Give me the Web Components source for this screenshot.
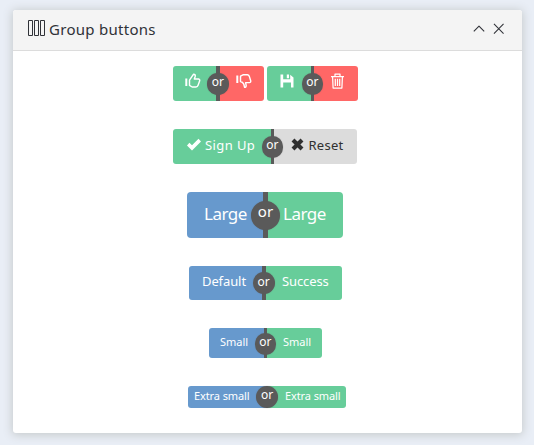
<!DOCTYPE html>
<html lang="en"><head><meta charset="utf-8"><title>Group buttons</title>
<style>
body{margin:0;width:534px;height:445px;overflow:hidden;background:#e9eef6;font-family:"Noto Sans",sans-serif;color:#303238}
panel-card{margin:10px 0 0 13px}
.row{display:flex;gap:3px}
</style></head><body>
<panel-card>
<span slot="title">Group buttons</span>
<div class="row" style="margin:15px 0 0 160px">
<or-group style="--h:35px;--l:43px;--s:4px;--r:44px;--bx:34px;--by:7px;--b:21.5px;--ot:-2px">
<or-button slot="a" tone="green" style="--pl:12px"><ui-icon name="up" style="--w:16px;--ih:16px;--it:7px"></ui-icon></or-button>
<or-button slot="b" tone="red" style="--pl:16px"><ui-icon name="down" style="--w:16px;--ih:16px;--it:7px"></ui-icon></or-button></or-group>
<or-group style="--h:35px;--l:44px;--s:3px;--r:44px;--bx:34.5px;--by:7px;--b:21.5px;--ot:-2px">
<or-button slot="a" tone="green" style="--pl:13px"><ui-icon name="save" style="--w:14px;--ih:14px;--it:8px"></ui-icon></or-button>
<or-button slot="b" tone="red" style="--pl:17px"><ui-icon name="trash" style="--w:13px;--ih:16px;--it:7px"></ui-icon></or-button></or-group>
</div>
<or-group style="margin:28px 0 0 160px;--h:35px;--l:98px;--s:3px;--r:83px;--bx:88.5px;--by:7px;--b:21.5px;--ot:-2px">
<or-button slot="a" tone="green" style="--pl:14px;--fs:13px;--lt:6px;--ls:.4px"><ui-icon name="check" style="--w:14px;--ih:13px;--it:9px;margin-right:4px"></ui-icon>Sign Up</or-button>
<or-button slot="b" tone="gray" style="--pl:17px;--fs:13px;--lt:6px;--ls:.25px"><ui-icon name="cross" style="--w:13px;--ih:13px;--it:9px;margin-right:4.5px"></ui-icon>Reset</or-button></or-group>
<or-group style="margin:28px 0 0 174px;--h:46px;--l:76px;--s:5px;--r:75px;--rad:4px;--bx:64px;--by:9px;--b:29px;--ofs:15px;--ot:-4px">
<or-button slot="a" tone="blue" style="--pl:17px;--fs:17px;--lt:11.5px;--ls:-.5px">Large</or-button>
<or-button slot="b" tone="green" style="--pl:15px;--fs:17px;--lt:11.5px;--ls:-.5px">Large</or-button></or-group>
<or-group style="margin:28px 0 0 176px;--h:34px;--l:73px;--s:4px;--r:76px;--bx:63.5px;--by:6px;--b:22px;--ot:-1.5px">
<or-button slot="a" tone="blue" style="--pl:13px;--fs:13px;--lt:5px;--ls:-.1px">Default</or-button>
<or-button slot="b" tone="green" style="--pl:16px;--fs:13px;--lt:5px;--ls:-.1px">Success</or-button></or-group>
<or-group style="margin:28px 0 0 196px;--h:30px;--l:55px;--s:3px;--r:55px;--bx:45.5px;--by:5px;--b:21.5px;--ot:-2px">
<or-button slot="a" tone="blue" style="--pl:11px;--fs:11px;--lt:4px">Small</or-button>
<or-button slot="b" tone="green" style="--pl:16px;--fs:11px;--lt:4px">Small</or-button></or-group>
<or-group style="margin:28px 0 0 175px;--h:22px;--l:78px;--s:2px;--r:78px;--bx:68px;--by:0px;--b:22px;--ot:-2px">
<or-button slot="a" tone="blue" style="--pl:6px;--fs:11px;--lt:0px;--ls:-.1px">Extra small</or-button>
<or-button slot="b" tone="green" style="--pl:17px;--fs:11px;--lt:0px;--ls:-.1px">Extra small</or-button></or-group>
</panel-card>
<script>
const define=(name,html,setup)=>customElements.define(name,class extends HTMLElement{
  connectedCallback(){
    if(this.shadowRoot)return;
    const t=document.createElement('template');t.innerHTML=html;
    this.attachShadow({mode:'open'}).append(t.content.cloneNode(true));
    if(setup)setup(this);
  }
});
const ICONS={
 up:['0 0 16 16','<path d="M1.3 5.5V13" stroke-width="2" stroke-linecap="butt"/><path d="M4.5 7.2 8.6 1.2Q10.6 1.1 10.2 3.4L9.3 6H13.6Q15.2 6.4 14.6 8L13 12.4Q12.6 14 11 14H7.2L4.5 12.3Z"/>'],
 down:['0 0 16 16','<path d="M1.3 2.5V10" stroke-width="2" stroke-linecap="butt"/><path d="M4.5 8.5V3.2L7 1.8H11.5Q13 2 13.4 3.6L14.7 7.8Q15 9.4 13.4 9.6H9.6L10.2 12.6Q10.2 14.4 8.6 14.3L7.8 11.2Q6.6 9 4.5 8.5Z"/>'],
 save:['0 0 14 14','<path d="M.5.5H3.2V5.2H10.2V.7L13.5 3.6V13.5H11V8.5H3.2V13.5H.5ZM6.8.5H9V4.2H6.8Z" fill="currentColor" stroke="none"/>'],
 trash:['0 0 13 16','<path d="M0 3.5H13M4 3.2V1H9V3.2M1.6 4.2 2.1 15H10.9L11.4 4.2M4.3 5.8V13M6.5 5.8V13M8.7 5.8V13" stroke-width="1.25"/>'],
 check:['0 0 14 12','<path d="M0 6.9 2.4 4.2 5 6.8 11.5.3 14 3 5 12Z" fill="currentColor" stroke="none"/>'],
 cross:['0 0 13 13','<path d="M2 2 11 11M11 2 2 11" stroke-width="4.1" stroke-linecap="butt"/>'],
 bars:['0 0 17 17','<path d="M.5.5H4.5V15.5H.5ZM6.5.5H10.5V15.5H6.5ZM12.5.5H16.5V15.5H12.5Z" stroke-width="1"/>'],
 chevron:['0 0 12 12','<path d="M.8 8.4 6 3.2 11.2 8.4" stroke-width="1.1"/>'],
 close:['0 0 12 12','<path d="M1 1 11 11M11 1 1 11" stroke-width="1.1"/>']
};
define('ui-icon',`<style>:host{display:block;flex:none;width:var(--w);height:var(--ih);margin-top:var(--it,0)}svg{display:block;width:100%;height:100%;fill:none;stroke:currentColor;stroke-width:1.45;stroke-linejoin:round;overflow:visible}</style><svg></svg>`,e=>{
  const [box,shape]=ICONS[e.getAttribute('name')],s=e.shadowRoot.querySelector('svg');
  s.setAttribute('viewBox',box);s.innerHTML=shape;
});
define('or-button',`<style>
:host{display:flex;box-sizing:border-box;height:100%;padding-left:var(--pl);color:#fff;white-space:nowrap;overflow:hidden}
:host([tone=green]){background:#67cd9a}:host([tone=red]){background:#ff6766}:host([tone=blue]){background:#6799cd}:host([tone=gray]){background:#dcdcdc;color:#303030}
.label{display:block;font-size:var(--fs,13px);letter-spacing:var(--ls,0);line-height:20px;padding-top:var(--lt,0)}
</style><slot name="icon"></slot><span class="label"><slot></slot></span>`,e=>{
  const icon=e.querySelector('ui-icon');
  if(icon)icon.slot='icon';
});
define('or-group',`<style>
:host{display:grid;grid-template-columns:var(--l) var(--s) var(--r);height:var(--h);width:max-content;position:relative;flex:none}
.half{height:var(--h);overflow:hidden}
.first{border-radius:var(--rad,3px) 0 0 var(--rad,3px)}.last{border-radius:0 var(--rad,3px) var(--rad,3px) 0}
.sep{background:#5a5a5a;height:var(--h)}
.or{position:absolute;left:var(--bx);top:var(--by);width:var(--b);height:var(--b);border-radius:50%;background:#5a5a5a;box-shadow:0 0 1px #5a5a5a88;color:#fff;text-align:center;font-size:var(--ofs,12px);line-height:calc(var(--b) + var(--ot)*2)}
</style><div class="half first"><slot name="a"></slot></div><div class="sep"></div><div class="half last"><slot name="b"></slot></div><span class="or">or</span>`);
define('panel-card',`<style>
:host{display:block;width:509px;height:423px;border-radius:3px;background:#fff;box-shadow:0 1px 10px 1px #c6cacb}
header{box-sizing:border-box;height:41px;display:flex;background:#f4f4f4;border-bottom:1px solid #dcdcdc;border-radius:3px 3px 0 0;padding-left:15px}
.title{font-size:15px;line-height:20px;margin:9px 0 0 4px;width:424px;letter-spacing:.28px}
.tools{display:flex;gap:8px;margin-top:13px}
</style><header><ui-icon name="bars" style="--w:17px;--ih:17px;--it:10px"></ui-icon><span class="title"><slot name="title"></slot></span><div class="tools"><ui-icon name="chevron" style="--w:12px;--ih:12px"></ui-icon><ui-icon name="close" style="--w:11.5px;--ih:11.5px"></ui-icon></div></header><slot></slot>`);
</script></body></html>
